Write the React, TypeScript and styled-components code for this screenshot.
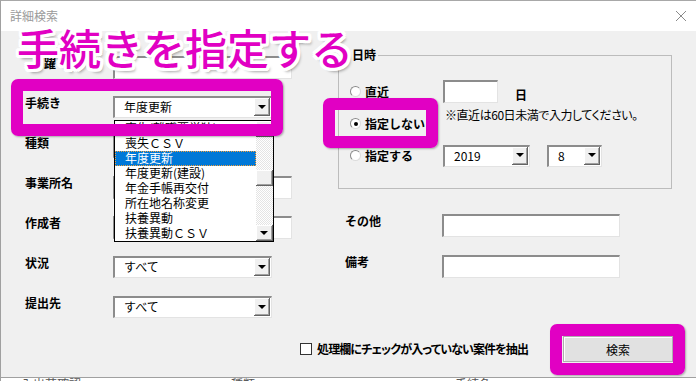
import styled, { createGlobalStyle } from "styled-components";

const GlobalStyle = createGlobalStyle`
    html, body {
        margin: 0;
        padding: 0;
        background: #ffffff;
    }

    body {
        font-family: "Noto Sans CJK JP", "Noto Sans", sans-serif;
        font-size: 12px;
        color: #000000;
    }
`

const MAGENTA = "#e100c3";

const listItems = [
    "喪失(離職票単独)",
    "喪失ＣＳＶ",
    "年度更新",
    "年度更新(建設)",
    "年金手帳再交付",
    "所在地名称変更",
    "扶養異動",
    "扶養異動ＣＳＶ",
];

function Combo({ w, value }: { w: number; value?: string }) {
    return (
        <ComboBox w={w}>
            <ComboValue>{value}</ComboValue>
            <ArrowButton><Triangle /></ArrowButton>
        </ComboBox>
    );
}

function Radio({ label, checked }: { label: string; checked?: boolean }) {
    return (
        <RadioRow>
            <RadioCircle>{checked && <RadioDot />}</RadioCircle>
            <BoldText>{label}</BoldText>
        </RadioRow>
    );
}

export default function App() {
    return (
        <>
            <GlobalStyle />
            <Window>
                <TitleBar>
                    <Title>詳細検索</Title>
                    <CloseIcon width="12" height="12" viewBox="0 0 12 12">
                        <path d="M1 1 L11 11 M11 1 L1 11" stroke="#8a8a8a" strokeWidth="1" fill="none" />
                    </CloseIcon>
                </TitleBar>

                <Body>
                    <TopArea>
                        <LeftColumn>
                            <HiddenLabel>躍</HiddenLabel>
                            <TextBox w={179} />

                            <Label>手続き</Label>
                            <Combo w={159} value="年度更新" />

                            <Label>種類</Label>
                            <Combo w={159} />

                            <Label>事業所名</Label>
                            <TextBox w={179} />

                            <Label>作成者</Label>
                            <TextBox w={179} />

                            <Label>状況</Label>
                            <Combo w={159} value="すべて" />

                            <Label>提出先</Label>
                            <Combo w={159} value="すべて" />
                        </LeftColumn>

                        <RightColumn>
                            <GroupBox>
                                <Legend>日時</Legend>
                                <DateGrid>
                                    <Radio label="直近" />
                                    <DaysRow>
                                        <TextBox w={55} />
                                        <DayUnit>日</DayUnit>
                                    </DaysRow>

                                    <Radio label="指定しない" checked />
                                    <Note>※直近は60日未満で入力してください。</Note>

                                    <Radio label="指定する" />
                                    <DaysRow>
                                        <Combo w={87} value="2019" />
                                        <Combo w={55} value="8" />
                                    </DaysRow>
                                </DateGrid>
                            </GroupBox>

                            <OtherGrid>
                                <Label>その他</Label>
                                <TextBox w={178} />
                                <Label>備考</Label>
                                <TextBox w={178} />
                            </OtherGrid>
                        </RightColumn>
                    </TopArea>

                    <Footer>
                        <CheckRow>
                            <CheckBox />
                            <CheckLabel>処理欄にチェックが入っていない案件を抽出</CheckLabel>
                        </CheckRow>
                        <SearchButton>検索</SearchButton>
                    </Footer>
                </Body>

                <Behind>
                    <BehindText gap={20}>入出荷確認</BehindText>
                    <BehindText gap={150}>種類</BehindText>
                    <BehindText gap={200}>手続名</BehindText>
                </Behind>

                <DropList>
                    <Items>
                        {listItems.map((item) => (
                            <Item key={item} selected={item === "年度更新"}>{item}</Item>
                        ))}
                    </Items>
                    <ScrollBar>
                        <ScrollButton><UpTriangle /></ScrollButton>
                        <Track><Thumb /></Track>
                        <ScrollButton><Triangle /></ScrollButton>
                    </ScrollBar>
                </DropList>

                <Highlight x={10} y={78} w={272} h={57} />
                <Highlight x={322} y={97} w={115} h={50} />
                <Highlight x={549} y={323} w={135} h={51} />

                <Caption>手続きを指定する</Caption>
            </Window>
        </>
    );
}

const Window = styled.div`
    position: relative;
    width: 696px;
    height: 381px;
    overflow: hidden;
    box-sizing: border-box;
    border-top: 1px solid #a8a8a8;
    border-left: 1px solid #a0a0a0;
    background: #f0f0f0;
`

const TitleBar = styled.div`
    height: 30px;
    display: flex;
    align-items: center;
    justify-content: space-between;
    padding: 0 9px 0 9px;
    background: #ffffff;
`

const Title = styled.span`
    font-size: 12px;
    color: #9a9a9a;
    margin-top: -2px;
`

const CloseIcon = styled.svg`
    display: block;
    margin-top: -1px;
`

const Body = styled.div`
    height: 347px;
    box-sizing: border-box;
    border-bottom: 1px solid #a0a0a0;
    display: flex;
    flex-direction: column;
    background: #f0f0f0;
`

const TopArea = styled.div`
    display: flex;
    flex-direction: row;
    gap: 46px;
`

const LeftColumn = styled.div`
    display: grid;
    grid-template-columns: 88px 179px;
    grid-auto-rows: 22px;
    row-gap: 18px;
    padding: 25px 0 0 24px;
    align-content: start;
`

const Label = styled.span`
    font-size: 12px;
    font-weight: bold;
    line-height: 14px;
    align-self: start;
    white-space: nowrap;
`

const HiddenLabel = styled(Label)`
    padding-left: 19px;
`

const BoldText = styled.span`
    font-size: 12px;
    font-weight: bold;
    line-height: 14px;
    white-space: nowrap;
`

const Sunken = styled.div`
    box-sizing: border-box;
    background: #ffffff;
    border-top: 2px solid #8c8c8c;
    border-left: 2px solid #8c8c8c;
    border-right: 1px solid #e3e3e3;
    border-bottom: 1px solid #e3e3e3;
`

const TextBox = styled(Sunken)<{ w: number }>`
    width: ${({ w }) => w}px;
    height: 23px;
`

const ComboBox = styled(Sunken)<{ w: number }>`
    width: ${({ w }) => w}px;
    height: 22px;
    display: flex;
    align-items: stretch;
    padding: 0 1px 1px 0;
`

const ComboValue = styled.span`
    flex: 1;
    padding-left: 9px;
    font-size: 12px;
    line-height: 18px;
    white-space: nowrap;
    overflow: hidden;
`

const Bevel = styled.div`
    box-sizing: border-box;
    display: flex;
    align-items: center;
    justify-content: center;
    background: #f0f0f0;
    border-right: 1px solid #646464;
    border-bottom: 1px solid #646464;
    box-shadow: inset 1px 1px 0 #ffffff, inset -1px -1px 0 #a0a0a0;
`

const ArrowButton = styled(Bevel)`
    width: 16px;
`

const Triangle = styled.span`
    width: 0;
    height: 0;
    border-left: 4px solid transparent;
    border-right: 4px solid transparent;
    border-top: 4px solid #000000;
`

const UpTriangle = styled(Triangle)`
    border-top: none;
    border-bottom: 4px solid #000000;
`

const RightColumn = styled.div`
    width: 334px;
    padding-top: 17px;
    display: flex;
    flex-direction: column;
`

const GroupBox = styled.fieldset`
    box-sizing: border-box;
    width: 334px;
    margin: 0;
    padding: 18px 0 21px 11px;
    border: 1px solid #bcbcbc;
`

const Legend = styled.legend`
    padding: 0 2px;
    font-size: 12px;
    font-weight: bold;
    line-height: 14px;
`

const DateGrid = styled.div`
    display: grid;
    grid-template-columns: 93px auto;
    grid-template-rows: 23px 41px 23px;
    align-items: center;
`

const RadioRow = styled.div`
    display: flex;
    align-items: center;
    gap: 4px;
`

const RadioCircle = styled.span`
    box-sizing: border-box;
    width: 11px;
    height: 11px;
    border-radius: 50%;
    background: #ffffff;
    border: 1px solid #8a8a8a;
    border-right-color: #dcdcdc;
    border-bottom-color: #dcdcdc;
    display: flex;
    align-items: center;
    justify-content: center;
`

const RadioDot = styled.span`
    width: 4px;
    height: 4px;
    border-radius: 50%;
    background: #000000;
`

const DaysRow = styled.div`
    display: flex;
    align-items: center;
    gap: 17px;
`

const DayUnit = styled.span`
    font-size: 12px;
    font-weight: bold;
    line-height: 14px;
    margin-top: 6px;
`

const Note = styled.span`
    align-self: start;
    margin-top: 5px;
    margin-left: 2px;
    font-size: 12px;
    line-height: 14px;
    white-space: nowrap;
    font-feature-settings: "palt";
    letter-spacing: -0.45px;
`

const OtherGrid = styled.div`
    display: grid;
    grid-template-columns: 97px 178px;
    grid-auto-rows: 23px;
    row-gap: 18px;
    margin-top: 25px;
    padding-left: 7px;
`

const Footer = styled.div`
    display: flex;
    flex-direction: row;
    justify-content: flex-end;
    align-items: center;
    gap: 35px;
    margin-top: 18px;
    padding-right: 23px;
`

const CheckRow = styled.div`
    display: flex;
    align-items: center;
    gap: 5px;
`

const CheckBox = styled.span`
    box-sizing: border-box;
    width: 12px;
    height: 12px;
    background: #ffffff;
    border: 1px solid #333333;
`

const CheckLabel = styled(BoldText)`
    font-feature-settings: "palt";
    letter-spacing: -0.9px;
`

const SearchButton = styled.button`
    box-sizing: border-box;
    width: 110px;
    height: 26px;
    margin: 0;
    padding: 0;
    font-family: "Noto Sans CJK JP", sans-serif;
    font-size: 12px;
    color: #000000;
    background: #e1e1e1;
    border: 1px solid #adadad;
    box-shadow: inset 1px 1px 0 #ffffff;
`

const Behind = styled.div`
    display: flex;
    height: 3px;
    overflow: hidden;
    background: #ffffff;
`

const BehindText = styled.span<{ gap: number }>`
    margin-left: ${({ gap }) => gap}px;
    margin-top: -1px;
    font-size: 12px;
    line-height: 14px;
    color: #555555;
    white-space: nowrap;
`

const DropList = styled.div`
    position: absolute;
    left: 113px;
    top: 119px;
    width: 160px;
    height: 122px;
    box-sizing: border-box;
    border: 1px solid #000000;
    background: #ffffff;
    display: flex;
`

const Items = styled.div`
    flex: 1;
    display: flex;
    flex-direction: column;
`

const Item = styled.div<{ selected?: boolean }>`
    height: 15px;
    box-sizing: border-box;
    padding-left: 10px;
    font-size: 12px;
    line-height: 14px;
    white-space: nowrap;
    overflow: hidden;
    color: ${({ selected }) => (selected ? "#ffffff" : "#000000")};
    background: ${({ selected }) => (selected ? "#0078d7" : "transparent")};
    outline: ${({ selected }) => (selected ? "1px dotted #f3a03c" : "none")};
    outline-offset: -1px;
`

const ScrollBar = styled.div`
    width: 17px;
    display: flex;
    flex-direction: column;
`

const ScrollButton = styled(Bevel)`
    height: 16px;
`

const Track = styled.div`
    flex: 1;
    background: repeating-conic-gradient(#e4e4e4 0 25%, #ffffff 0 50%) 0 0 / 2px 2px;
`

const Thumb = styled(Bevel)`
    height: 16px;
    margin-top: 33px;
`

const Highlight = styled.div<{ x: number; y: number; w: number; h: number }>`
    position: absolute;
    left: ${({ x }) => x}px;
    top: ${({ y }) => y}px;
    width: ${({ w }) => w}px;
    height: ${({ h }) => h}px;
    box-sizing: border-box;
    border: 12px solid ${MAGENTA};
    border-radius: 7px;
    box-shadow: 1px 1px 2px rgba(0, 0, 0, 0.3);
`

const Caption = styled.div`
    position: absolute;
    left: 16px;
    top: 25px;
    font-family: "Noto Sans CJK JP", sans-serif;
    font-size: 42px;
    font-weight: 500;
    line-height: 42px;
    color: ${MAGENTA};
    white-space: nowrap;
    text-shadow:
        3px 0 0 #fff, -3px 0 0 #fff, 0 3px 0 #fff, 0 -3px 0 #fff,
        2px 2px 0 #fff, -2px 2px 0 #fff, 2px -2px 0 #fff, -2px -2px 0 #fff,
        3px 2px 0 #fff, -3px 2px 0 #fff, 3px -2px 0 #fff, -3px -2px 0 #fff,
        2px 3px 0 #fff, -2px 3px 0 #fff, 2px -3px 0 #fff, -2px -3px 0 #fff,
        3px 4px 3px rgba(0, 0, 0, 0.35);
`
